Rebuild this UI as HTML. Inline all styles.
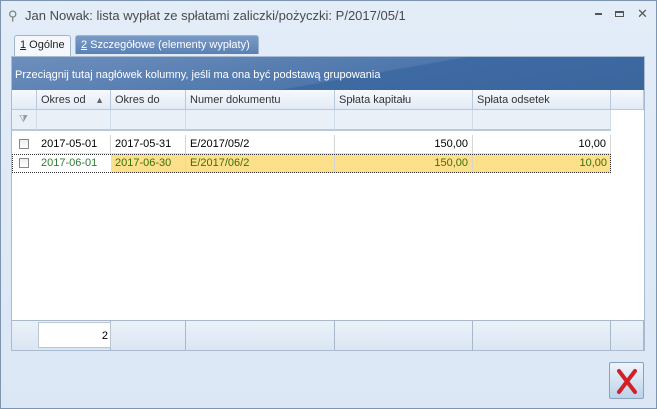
<!DOCTYPE html>
<html><head><style>
*{margin:0;padding:0;box-sizing:border-box}
body{width:657px;height:409px;overflow:hidden;font-family:"Liberation Sans",sans-serif;font-size:11px;background:#dfeaf6;position:relative}
.win{position:absolute;left:0;top:0;width:657px;height:409px;border:1px solid #7f95ad;background:linear-gradient(#e3edf8,#dbe7f5)}
.title{position:absolute;left:24px;top:7px;font-size:13px;color:#4a4a4a}
.abs{position:absolute}
.tab{position:absolute;top:34px;height:19px;font-size:11px;padding:3px 5px;border:1px solid #9fb5cc;border-bottom:none;border-radius:3px 3px 0 0;white-space:nowrap}
.panel{position:absolute;left:10px;top:55px;width:634px;height:295px;border:1px solid #a8bbd0;background:#fff}
.grp{position:absolute;left:0;top:0;width:632px;height:33px;background:linear-gradient(170deg,#6d8fbd 0%,#4f77ac 55%,#3e6aa3 56%,#3b659d 100%);color:#fff;font-size:11px;padding:12px 0 0 3px;white-space:nowrap}
.hdr{position:absolute;top:33px;height:20px;background:linear-gradient(#f6f9fd,#e2ebf6);border-right:1px solid #b9c9da;border-bottom:1px solid #b9c9da;padding:4px 4px;color:#333;font-size:11px}
.flt{position:absolute;top:53px;height:21px;background:#e9f0f8;border-right:1px solid #cfdbe8;border-bottom:2px solid #b9c9da}
.cell{position:absolute;height:19px;border-right:1px solid #d6d6d6;border-bottom:1px solid #e2e2e2;padding:3px 4px;font-size:11px}
.r{text-align:right}
.foot{position:absolute;top:263px;height:30px;background:linear-gradient(#eaf1f9,#dbe6f3);border-right:1px solid #a9b8c8;border-top:1px solid #a9b8c8}
.cb{position:absolute;width:10px;height:10px;border:1px solid #888;background:linear-gradient(#eee,#fff)}
</style></head><body>
<div class="win">
<div class="abs" style="left:7px;top:7px;font-size:13px;color:#777">⚲</div>
<div class="title">Jan Nowak: lista wypłat ze spłatami zaliczki/pożyczki: P/2017/05/1</div>
<div class="abs" style="left:594px;top:12px;width:7px;height:2px;background:#555"></div>
<div class="abs" style="left:614px;top:10px;width:9px;height:6px;border:1px solid #555;border-top-width:2px"></div>
<div class="abs" style="left:636px;top:5px;font-size:13px;color:#555">✕</div>

<div class="tab" style="left:13px;background:#f4f8fc;color:#222;height:21px"><u>1</u> Ogólne</div>
<div class="tab" style="left:74px;width:184px;background:linear-gradient(#7a9bc6,#5a80b5);color:#fff"><u>2</u> Szczegółowe (elementy wypłaty)</div>

<div class="panel">
<div class="grp">Przeciągnij tutaj nagłówek kolumny, jeśli ma ona być podstawą grupowania</div>
<div class="hdr" style="left:0;width:25px"></div>
<div class="hdr" style="left:25px;width:74px">Okres od <span style="position:absolute;right:6px;font-size:9px;color:#666;top:5px">▲</span></div>
<div class="hdr" style="left:99px;width:75px">Okres do</div>
<div class="hdr" style="left:174px;width:149px">Numer dokumentu</div>
<div class="hdr" style="left:323px;width:138px">Spłata kapitału</div>
<div class="hdr" style="left:461px;width:138px">Spłata odsetek</div>
<div class="hdr" style="left:599px;width:33px"></div>
<div class="flt" style="left:0;width:25px;color:#8a9ab0;padding:4px 7px;font-size:10px">⧩</div>
<div class="flt" style="left:25px;width:74px"></div>
<div class="flt" style="left:99px;width:75px"></div>
<div class="flt" style="left:174px;width:149px"></div>
<div class="flt" style="left:323px;width:138px"></div>
<div class="flt" style="left:461px;width:138px"></div>

<div class="cb" style="left:7px;top:82px"></div>
<div class="cell" style="top:78px;left:25px;width:74px">2017-05-01</div>
<div class="cell" style="top:78px;left:99px;width:75px">2017-05-31</div>
<div class="cell" style="top:78px;left:174px;width:149px">E/2017/05/2</div>
<div class="cell r" style="top:78px;left:323px;width:138px">150,00</div>
<div class="cell r" style="top:78px;left:461px;width:138px">10,00</div>

<div class="cell" style="top:97px;left:25px;width:74px;color:#2e7d32;border:none;background:#fff">2017-06-01</div>
<div class="cb" style="left:7px;top:101px"></div>
<div class="cell" style="top:97px;left:99px;width:500px;background:#fde08a;border:none"></div>
<div class="cell" style="top:97px;left:99px;width:75px;color:#3a6e10;border-bottom:none">2017-06-30</div>
<div class="cell" style="top:97px;left:174px;width:149px;color:#3a6e10;border-bottom:none">E/2017/06/2</div>
<div class="cell r" style="top:97px;left:323px;width:138px;color:#3a6e10;border-bottom:none">150,00</div>
<div class="cell r" style="top:97px;left:461px;width:138px;color:#3a6e10;border:none">10,00</div>
<div class="abs" style="top:97px;left:0;width:599px;height:19px;border:1px dotted #333;z-index:5"></div>

<div class="foot" style="left:0;width:99px"></div>
<div class="abs" style="left:26px;top:265px;width:73px;height:26px;background:#fff;border:1px solid #b9c6d4;text-align:right;padding:7px 2px;font-size:11px">2</div>
<div class="foot" style="left:99px;width:75px"></div>
<div class="foot" style="left:174px;width:149px"></div>
<div class="foot" style="left:323px;width:138px"></div>
<div class="foot" style="left:461px;width:138px"></div>
<div class="foot" style="left:599px;width:33px"></div>
</div>

<div class="abs" style="left:608px;top:361px;width:35px;height:37px;border:1px solid #8aa3bd;border-radius:2px;background:linear-gradient(#eef4fb,#bcd3ea)">
<svg width="33" height="35" viewBox="0 0 33 35"><path d="M9 8 L25 29 M25 8 L9 29" stroke="#d0212b" stroke-width="4" stroke-linecap="round"/></svg>
</div>
</div>
</body></html>
